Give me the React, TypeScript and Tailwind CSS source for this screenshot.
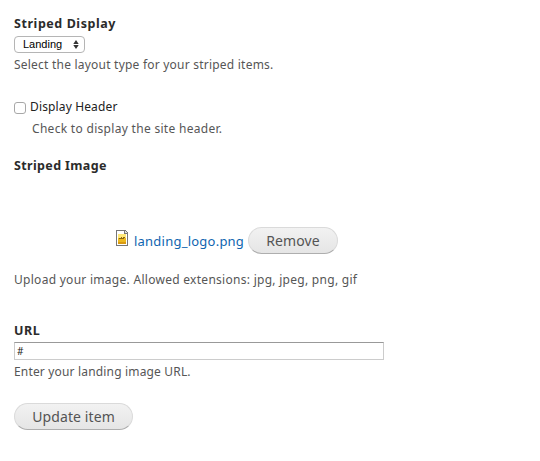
import { useState, type ReactNode } from "react";

function Label({ children, className = "" }: { children: ReactNode; className?: string }) {
  return <div className={`h-4 text-[12.5px] leading-4 font-bold text-[#2b2b2b] ${className}`}>{children}</div>;
}

function Help({ children, className = "" }: { children: ReactNode; className?: string }) {
  return <div className={`h-4 text-[12px] leading-4 text-[#565656] ${className}`}>{children}</div>;
}

function Button({ children, className = "" }: { children: ReactNode; className?: string }) {
  return (
    <button
      type="button"
      className={`flex h-[27px] items-center justify-center rounded-full border border-[#dadada] border-b-[#aeaeae] bg-linear-to-b from-[#f2f2f2] to-[#e5e5e5] text-[14px] leading-4 tracking-[0.1px] text-[#545454] ${className}`}
    >
      {children}
    </button>
  );
}

function ImageFileIcon() {
  return (
    <svg className="mb-1.5 h-4 w-3.5 shrink-0" viewBox="0 0 14 16" shapeRendering="crispEdges" aria-hidden="true">
      <path d="M1 0H10L13 3V16H1Z" fill="#777" />
      <path d="M2 1H9V4H12V15H2Z" fill="#fff" />
      <path d="M10 1L12 3H10Z" fill="#ddd" />
      <path d="M3 4H11V14H3Z" fill="#edb91f" />
      <path d="M3 4H11V8H3Z" fill="#ffe878" />
      <path d="M4 8H6V7H7V8H8V7H10V8H9V9H4Z" fill="#8a6510" />
      <path d="M3 12H11V14H3Z" fill="#d99a12" />
    </svg>
  );
}

export default function App() {
  const [checked, setChecked] = useState(false);
  const [url, setUrl] = useState("#");

  return (
    <form className="flex h-[461px] w-[540px] flex-col bg-white pt-4 pl-3.5 font-['Noto_Sans',sans-serif]">
      <Label className="tracking-[0.56px]">Striped Display</Label>
      <button
        type="button"
        className="mt-1 flex h-[17px] w-[71px] items-center rounded-[4px] border border-[#b5b5b5] bg-white pr-[5px] pl-2 font-['Liberation_Sans',sans-serif] text-[11px] leading-none text-black"
      >
        <span>Landing</span>
        <svg className="ml-auto h-[9px] w-[6px]" viewBox="0 0 6 9" fill="#333" aria-hidden="true">
          <path d="M3 0L5.7 4H.3ZM3 9L.3 5H5.7Z" />
        </svg>
      </button>
      <Help className="mt-1 tracking-[0.22px]">Select the layout type for your striped items.</Help>

      <label className="mt-[26px] flex h-4 items-center text-[12px] leading-4 tracking-[0.14px] text-[#222]">
        <input
          type="checkbox"
          checked={checked}
          onChange={(e) => setChecked(e.target.checked)}
          className="mt-px mr-1 h-3 w-3 appearance-none rounded-[3px] border border-[#a8a8a8] bg-white checked:bg-blue-500"
        />
        Display Header
      </label>
      <Help className="mt-1.5 pl-[18px] tracking-[0.3px]">Check to display the site header.</Help>

      <Label className="mt-[21px] tracking-[0.36px]">Striped Image</Label>
      <div className="mt-[53px] flex h-[27px] items-center pl-[101px]">
        <ImageFileIcon />
        <a href="#" className="ml-[5px] w-[114px] text-[13px] leading-4 tracking-[0.23px] text-[#0f65b0]">
          landing_logo.png
        </a>
        <Button className="w-[90px]">Remove</Button>
      </div>
      <Help className="mt-[18px] tracking-[0.28px]">Upload your image. Allowed extensions: jpg, jpeg, png, gif</Help>

      <Label className="mt-[35px] tracking-[0.5px]">URL</Label>
      <input
        type="text"
        value={url}
        onChange={(e) => setUrl(e.target.value)}
        aria-label="URL"
        className="mt-[3px] h-[18px] w-[370px] border border-[#ccc] border-t-[#999] bg-white px-0.5 text-[10px] leading-4 text-[#222] outline-none"
      />
      <Help className="mt-1 tracking-[0.17px]">Enter your landing image URL.</Help>
      <Button className="mt-[23px] w-[119px]">Update item</Button>
    </form>
  );
}
